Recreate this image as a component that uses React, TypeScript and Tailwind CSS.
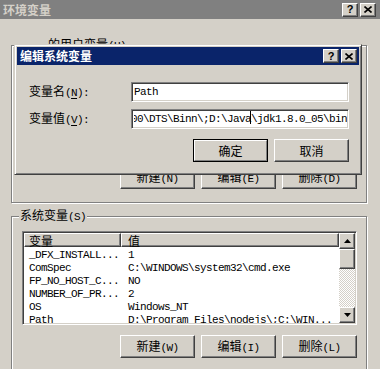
const mono = "font-['Liberation_Mono',monospace] text-[11px] tracking-[-0.6px]";

function M({ children }: { children: React.ReactNode }) {
  return <span className={mono}>{children}</span>;
}

function Bevel({ children, className = "" }: { children?: React.ReactNode; className?: string }) {
  return (
    <div
      className={
        "flex items-center justify-center bg-[#d4d0c8] border border-t-white border-l-white border-r-[#404040] border-b-[#404040] shadow-[inset_-1px_-1px_0_#808080] " +
        className
      }
    >
      {children}
    </div>
  );
}

function Btn({ cn, key2, def }: { cn: string; key2?: string; def?: boolean }) {
  const label = (
    <span className="leading-none">
      {cn}
      {key2 && <M>({key2})</M>}
    </span>
  );
  if (def) {
    return (
      <div className="w-[75px] h-[23px] border border-black">
        <div className="w-full h-full flex items-center justify-center border border-t-white border-l-white border-r-[#808080] border-b-[#808080]">
          {label}
        </div>
      </div>
    );
  }
  return <Bevel className="w-[75px] h-[23px]">{label}</Bevel>;
}

function TitleButtons() {
  return (
    <div className="flex gap-[2px]">
      <Bevel className="w-[16px] h-[14px]">
        <span className="font-['Liberation_Sans',sans-serif] font-bold text-[11px] leading-none">?</span>
      </Bevel>
      <Bevel className="w-[16px] h-[14px]">
        <svg width="8" height="7" viewBox="0 0 8 7">
          <path d="M0.5 0.5L7.5 6.5M7.5 0.5L0.5 6.5" stroke="black" strokeWidth="1.6" />
        </svg>
      </Bevel>
    </div>
  );
}

function Arrow({ up }: { up?: boolean }) {
  return (
    <Bevel className="w-[16px] h-[16px]">
      <svg width="7" height="4" viewBox="0 0 7 4">
        <path d={up ? "M3.5 0L7 4H0Z" : "M0 0H7L3.5 4Z"} fill="black" />
      </svg>
    </Bevel>
  );
}

const rows = [
  ["_DFX_INSTALL...", "1"],
  ["ComSpec", "C:\\WINDOWS\\system32\\cmd.exe"],
  ["FP_NO_HOST_C...", "NO"],
  ["NUMBER_OF_PR...", "2"],
  ["OS", "Windows_NT"],
  ["Path", "D:\\Program Files\\nodejs\\;C:\\WIN..."],
];

function ListView() {
  return (
    <div className="w-[335px] h-[94px] flex border border-t-[#808080] border-l-[#808080] border-r-white border-b-white shadow-[inset_1px_1px_0_#404040,inset_-1px_-1px_0_#d4d0c8] p-px bg-white">
      <div className="flex-1 flex flex-col overflow-hidden">
        <div className="flex h-[14px] shrink-0">
          <Bevel className="w-[97px] h-[14px] !justify-start pl-[4px]">
            <span className="leading-[11px]">变量</span>
          </Bevel>
          <Bevel className="flex-1 h-[14px] !justify-start pl-[6px]">
            <span className="leading-[11px]">值</span>
          </Bevel>
        </div>
        {rows.map(([a, b]) => (
          <div key={a} className="flex h-[13px] shrink-0 items-center whitespace-nowrap leading-[12px]">
            <div className="w-[97px] pl-[5px]">
              <M>{a}</M>
            </div>
            <div className="pl-[7px]">
              <M>{b}</M>
            </div>
          </div>
        ))}
      </div>
      <div className="w-[16px] flex flex-col">
        <Arrow up />
        <Bevel className="w-[16px] h-[20px]" />
        <div className="flex-1 bg-[repeating-conic-gradient(#fff_0%_25%,#d4d0c8_0%_50%)] bg-[length:2px_2px]" />
        <Arrow />
      </div>
    </div>
  );
}

function GroupBox({ label, left, className = "", children }: { label: React.ReactNode; left: string; className?: string; children?: React.ReactNode }) {
  return (
    <div className={"relative w-[356px] border border-[#808080] shadow-[inset_1px_1px_0_#fff,1px_1px_0_#fff] " + className}>
      <div className={"absolute -top-[8px] h-[14px] flex items-center bg-[#d4d0c8] px-[1px] leading-none " + left}>{label}</div>
      {children}
    </div>
  );
}

function TextBox({ children }: { children: React.ReactNode }) {
  return (
    <div className="w-[218px] h-[20px] bg-white border border-t-[#808080] border-l-[#808080] border-r-white border-b-white shadow-[inset_1px_1px_0_#404040,inset_-1px_-1px_0_#d4d0c8] pl-[2px] pr-[1px] flex items-center overflow-hidden whitespace-nowrap">
      {children}
    </div>
  );
}

export default function App() {
  return (
    <div className="relative w-[380px] h-[369px] overflow-hidden bg-[#d4d0c8] text-black font-['Noto_Sans_CJK_SC',sans-serif] text-[12px]">
      <div className="h-[19px] bg-[#808080] flex items-center justify-between pl-[3px] pr-[4px]">
        <span className="font-bold text-[#d4d0c8] leading-none">环境变量</span>
        <TitleButtons />
      </div>

      <div className="pl-[11px]">
        <GroupBox
          className="mt-[26px] h-[158px]"
          left="left-[35px]"
          label={
            <span className="leading-none">
              的用户变量<M>(U)</M>
            </span>
          }
        >
          <div className="pt-[120px] pr-[9px] flex justify-end gap-[6px]">
            <Btn cn="新建" key2="N" />
            <Btn cn="编辑" key2="E" />
            <Btn cn="删除" key2="D" />
          </div>
        </GroupBox>

        <GroupBox
          className="mt-[13px] h-[170px]"
          left="left-[7px]"
          label={
            <span className="leading-none">
              系统变量<M>(S)</M>
            </span>
          }
        >
          <div className="pt-[14px] pl-[10px]">
            <ListView />
          </div>
          <div className="pt-[10px] pr-[9px] flex justify-end gap-[6px]">
            <Btn cn="新建" key2="W" />
            <Btn cn="编辑" key2="I" />
            <Btn cn="删除" key2="L" />
          </div>
        </GroupBox>
      </div>

      <div className="absolute left-[14px] top-[44px] w-[348px] h-[131px] bg-[#d4d0c8] border border-t-[#d4d0c8] border-l-[#d4d0c8] border-r-[#404040] border-b-[#404040] shadow-[inset_1px_1px_0_#fff,inset_-1px_-1px_0_#808080] p-[2px] flex flex-col">
        <div className="h-[18px] bg-[#0a246a] flex items-center justify-between pl-[3px] pr-[2px]">
          <span className="font-bold text-white leading-none">编辑系统变量</span>
          <TitleButtons />
        </div>
        <div className="pl-[12px] pr-[10px] pt-[17px] flex flex-col">
          <div className="flex items-center">
            <span className="w-[102px] leading-none">
              变量名
              <M>
                (<span className="underline underline-offset-2">N</span>):
              </M>
            </span>
            <TextBox>
              <M>Path</M>
            </TextBox>
          </div>
          <div className="flex items-center mt-[7px]">
            <span className="w-[102px] leading-none">
              变量值
              <M>
                (<span className="underline underline-offset-2">V</span>):
              </M>
            </span>
            <TextBox>
              <div className="flex-1 flex justify-end items-center overflow-hidden">
                <span className={mono + " relative shrink-0"}>
                  {"C:\\Program Files\\Microsoft SQL Server\\100\\DTS\\Binn\\;D:\\Java\\jdk1.8.0_05\\bin"}
                  <span className="absolute right-[96px] top-[-1px] w-px h-[14px] bg-black" />
                </span>
              </div>
            </TextBox>
          </div>
          <div className="flex justify-end gap-[6px] mt-[10px]">
            <Btn cn="确定" def />
            <Btn cn="取消" />
          </div>
        </div>
      </div>
    </div>
  );
}
